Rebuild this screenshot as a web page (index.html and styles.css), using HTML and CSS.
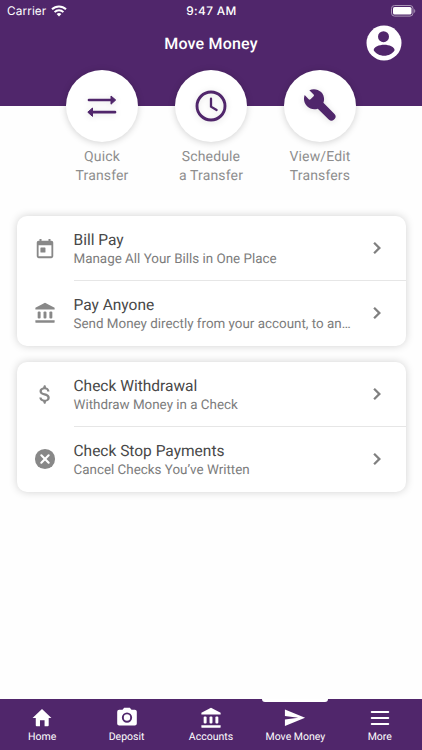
FILE: index.html
```html
<!DOCTYPE html>
<html lang="en">
<head>
<meta charset="utf-8">
<title>Move Money</title>
<link rel="stylesheet" href="styles.css">
</head>
<body>
<svg width="0" height="0" class="defs">
  <symbol id="bank" viewBox="0 0 24 24"><path d="M12 .8 22.500 6.300V8.300H1.500V6.300z"/><path d="M1.500 20h21v1.700a1 1 0 0 1-1 1H2.500a1 1 0 0 1-1-1z"/><rect x="4" y="10.300" width="3.200" height="7.700" rx="1.200"/><rect x="10.400" y="10.300" width="3.200" height="7.700" rx="1.200"/><rect x="16.800" y="10.300" width="3.200" height="7.700" rx="1.200"/></symbol>
  <symbol id="chevron" viewBox="0 0 24 24"><path d="M8.300 16.500 12.800 12 8.300 7.500 9.900 5.900l6.100 6.100-6.100 6.100z"/></symbol>
</svg>
<div class="screen">
  <header class="header">
    <div class="status">
      <div class="carrier"><span>Carrier</span>
        <svg width="16" height="12" viewBox="0 0 16 12" fill="none" stroke="#fff" stroke-width="2"><path d="M1 4.300a10 10 0 0 1 14 0M3.600 7.100a6.200 6.200 0 0 1 8.800 0"/><path d="M8 11.500 5.600 9.100a3.400 3.400 0 0 1 4.800 0z" fill="#fff" stroke="none"/></svg>
      </div>
      <div class="time">9:47 AM</div>
      <div class="battery">
        <svg width="25" height="12" viewBox="0 0 25 12"><rect x=".5" y=".5" width="21.500" height="10.600" rx="3" fill="none" stroke="#a995b6"/><rect x="2" y="2" width="18.500" height="7.600" rx="1.600" fill="#fff"/><path d="M23.200 4v4c1.400-.6 1.400-3.400 0-4z" fill="#a995b6"/></svg>
      </div>
    </div>
    <div class="titlebar">
      <h1>Move Money</h1>
      <svg class="avatar" viewBox="0 0 36 36"><circle cx="18" cy="18" r="17.500" fill="#fff"/><circle cx="17.500" cy="11.700" r="5.500" fill="#50266b"/><path d="M7.700 25.300c0-3.300 5.500-5.500 10.500-5.500s10.400 2.200 10.400 5.500c-2 3.400-6 5.500-10.400 5.500s-8.500-2.100-10.500-5.500z" fill="#50266b"/></svg>
    </div>
  </header>
  <section class="actions">
    <div class="action">
      <div class="circle"><svg width="36" height="36" viewBox="0 0 36 36"><path d="M5 12h24M8 24.200h23" stroke="#50266b" stroke-width="2.700" stroke-linecap="round"/><path d="M27 8 31.700 12 27 16.200zM8.500 20 3.800 24.200 8.500 28.400z" fill="#50266b" stroke="#50266b" stroke-linejoin="round"/></svg></div>
      <p>Quick<br>Transfer</p>
    </div>
    <div class="action">
      <div class="circle"><svg width="36" height="36" viewBox="0 0 36 36" fill="none" stroke="#50266b"><circle cx="18" cy="18" r="14" stroke-width="2.900"/><path d="M18 10.700v8l5.600 3.300" stroke-width="2.300" stroke-linecap="round"/></svg></div>
      <p>Schedule<br>a Transfer</p>
    </div>
    <div class="action">
      <div class="circle"><svg width="36" height="36" viewBox="0 0 36 36"><path fill="#50266b" d="M7.300 2.200C11.300.3 16 1 19.100 4.100c2.900 2.900 3.700 7.100 2.300 10.700l11.100 11.200c1.500 1.500 1.500 3.500.3 4.800l-1 1c-1.400 1.400-3.400 1.400-4.800 0L15.800 20.700c-3.600 1.300-7.800.5-10.700-2.400C2 15.200 1.200 10.700 2.700 6.900l4 4.400c.5.6 1.300.6 1.800 0l3.100-3.100c.5-.5.5-1.300 0-1.800z"/></svg></div>
      <p>View/Edit<br>Transfers</p>
    </div>
  </section>
  <main class="cards">
    <section class="card">
      <div class="row">
        <svg class="icon" viewBox="0 0 24 24"><path d="M19 3h-1V1h-2.200v2H8.200V1H6v2H5a2 2 0 0 0-2 2v15a2 2 0 0 0 2 2h14a2 2 0 0 0 2-2V5a2 2 0 0 0-2-2zm0 17H5V8h14z"/><rect x="7" y="10.300" width="5.500" height="5.500" rx=".6"/></svg>
        <div class="body"><div class="text"><h2>Bill Pay</h2><p>Manage All Your Bills in One Place</p></div><svg class="chev"><use href="#chevron"/></svg></div>
      </div>
      <div class="row">
        <svg class="icon"><use href="#bank"/></svg>
        <div class="body"><div class="text"><h2>Pay Anyone</h2><p>Send Money directly from your account, to an…</p></div><svg class="chev"><use href="#chevron"/></svg></div>
      </div>
    </section>
    <section class="card">
      <div class="row">
        <svg class="icon" viewBox="0 0 24 24"><path transform="translate(-1.300 -2)scale(1.120)" d="M11.800 10.900c-2.270-.59-3-1.200-3-2.150 0-1.090 1.010-1.850 2.700-1.850 1.780 0 2.440.85 2.500 2.100h2.210c-.07-1.720-1.120-3.300-3.210-3.810L12.300 3h-1.400L10 5.160c-1.940.42-3.500 1.680-3.500 3.610 0 2.310 1.910 3.460 4.700 4.130 2.500.6 3 1.480 3 2.410 0 .69-.49 1.790-2.700 1.790-2.060 0-2.870-.92-2.980-2.100h-2.200c.12 2.190 1.760 3.420 3.680 3.830l.9 2.170h1.400l.7-2.150c1.950-.37 3.500-1.500 3.500-3.550 0-2.840-2.430-3.810-4.700-4.400z"/></svg>
        <div class="body"><div class="text"><h2>Check Withdrawal</h2><p>Withdraw Money in a Check</p></div><svg class="chev"><use href="#chevron"/></svg></div>
      </div>
      <div class="row">
        <svg class="icon" viewBox="0 0 24 24"><circle cx="12" cy="12" r="11"/><path d="m8 8 8 8m0-8-8 8" stroke="#fff" stroke-width="2.300" stroke-linecap="round"/></svg>
        <div class="body"><div class="text"><h2>Check Stop Payments</h2><p>Cancel Checks You’ve Written</p></div><svg class="chev"><use href="#chevron"/></svg></div>
      </div>
    </section>
  </main>
  <nav class="nav">
    <div class="tab"><svg viewBox="0 0 24 24"><path d="M12 2.300 22.300 12H19.300V20a1 1 0 0 1-1 1h-3.500v-6.500H9.800V21H6.200a1 1 0 0 1-1-1v-8H1.700z"/></svg><span>Home</span></div>
    <div class="tab"><svg viewBox="0 0 24 24"><path fill-rule="evenodd" d="M8.900.9 7.100 3H3.500a2.200 2.200 0 0 0-2.200 2.200V18c0 1.200 1 2.200 2.200 2.200h17c1.200 0 2.200-1 2.200-2.200V5.200c0-1.200-1-2.200-2.200-2.200h-3.600L15.100.9zM12 5.900a5.600 5.600 0 1 1 0 11.200 5.600 5.600 0 0 1 0-11.200zm0 2.100a3.500 3.500 0 1 0 0 7 3.500 3.500 0 0 0 0-7z"/></svg><span>Deposit</span></div>
    <div class="tab"><svg><use href="#bank"/></svg><span>Accounts</span></div>
    <div class="tab active"><svg viewBox="0 0 24 24"><path d="M1 20.700 23 11.700 1 2.700v7l14.500 2L1 13.700z"/></svg><span>Move Money</span></div>
    <div class="tab"><svg viewBox="0 0 24 24"><path d="M3 5.500h18M3 12h18M3 18.500h18" stroke="#fff" stroke-width="2.200" stroke-linecap="round"/></svg><span>More</span></div>
  </nav>
</div>
</body>
</html>
```
FILE: styles.css
```css
* { box-sizing: border-box; margin: 0; padding: 0; }
body { font-family: Roboto, sans-serif; background: #fff; text-rendering: geometricPrecision; }
.defs { position: absolute; }
.screen { width: 422px; height: 750px; display: flex; flex-direction: column; overflow: hidden; background: #fefefe; }
.header { height: 106px; background: #50266b; color: #fff; flex: none; }
.status { display: grid; grid-template-columns: 1fr auto 1fr; height: 22px; padding: 0 6px 0 7px; align-items: center; font: 11.800px/22px Inter, sans-serif; }
.carrier { display: flex; align-items: center; gap: 5px; letter-spacing: .1px; }
.time { font-weight: 500; font-size: 11.800px; letter-spacing: .4px; }
.battery { display: flex; justify-content: flex-end; }
.titlebar { height: 42px; display: grid; grid-template-columns: 1fr auto 1fr; align-items: center; padding-right: 20px; padding-left: 20px; }
.titlebar h1 { grid-column: 2; font-size: 16px; font-weight: 500; letter-spacing: .2px; }
.avatar { width: 36px; height: 36px; justify-self: end; }
.actions { display: grid; grid-template-columns: repeat(3, 109px); justify-content: center; margin-top: -36px; height: 146px; flex: none; }
.action { display: flex; flex-direction: column; align-items: center; }
.circle { width: 72px; height: 72px; border-radius: 50%; background: #fff; display: grid; place-items: center; box-shadow: 0 1px 7px rgba(0,0,0,.18); }
.circle svg { filter: drop-shadow(0 1px 3px rgba(0,0,0,.12)); }
.action p { margin-top: 6px; text-align: center; font-size: 14px; line-height: 19px; letter-spacing: .15px; color: #8e8e8e; }
.cards { flex: 1; padding: 0 16.500px; display: flex; flex-direction: column; gap: 16px; }
.card { height: 130px; border-radius: 10px; background: #fff; box-shadow: 0 0 8px rgba(0,0,0,.18); }
.row { height: 65px; display: grid; grid-template-columns: 57px minmax(0, 1fr); align-items: center; }
.row:last-child { padding-bottom: 1px; }
.icon { width: 22px; height: 22px; margin-left: 17.500px; fill: #888; }
.body { height: 65px; min-width: 0; display: flex; align-items: center; padding-right: 16.500px; }
.row:first-child .body { border-bottom: 1px solid #e6e6e6; }
.row:last-child .body { height: 64px; }
.text { width: 280px; min-width: 0; padding-top: 3px; }
.text h2 { font-size: 15.500px; line-height: 19px; font-weight: 400; letter-spacing: 0; color: #484848; }
.text p { font-size: 13.400px; line-height: 19px; letter-spacing: 0; color: #7c7c7c; white-space: nowrap; }
.chev { width: 24px; height: 24px; flex: none; margin-left: auto; fill: #808080; }
.nav { height: 51px; flex: none; background: #50266b; color: #fff; display: grid; grid-template-columns: repeat(5, 1fr); }
.tab { position: relative; display: flex; flex-direction: column; align-items: center; padding-top: 8px; font-size: 10.500px; line-height: 14px; letter-spacing: 0; }
.tab svg { width: 22px; height: 22px; fill: #fff; }
.tab span { margin-top: 1px; }
.active::before { content: ""; position: absolute; top: 0; left: 9px; width: 66px; height: 3px; background: #fff; border-radius: 0 0 3px 3px; }
```
